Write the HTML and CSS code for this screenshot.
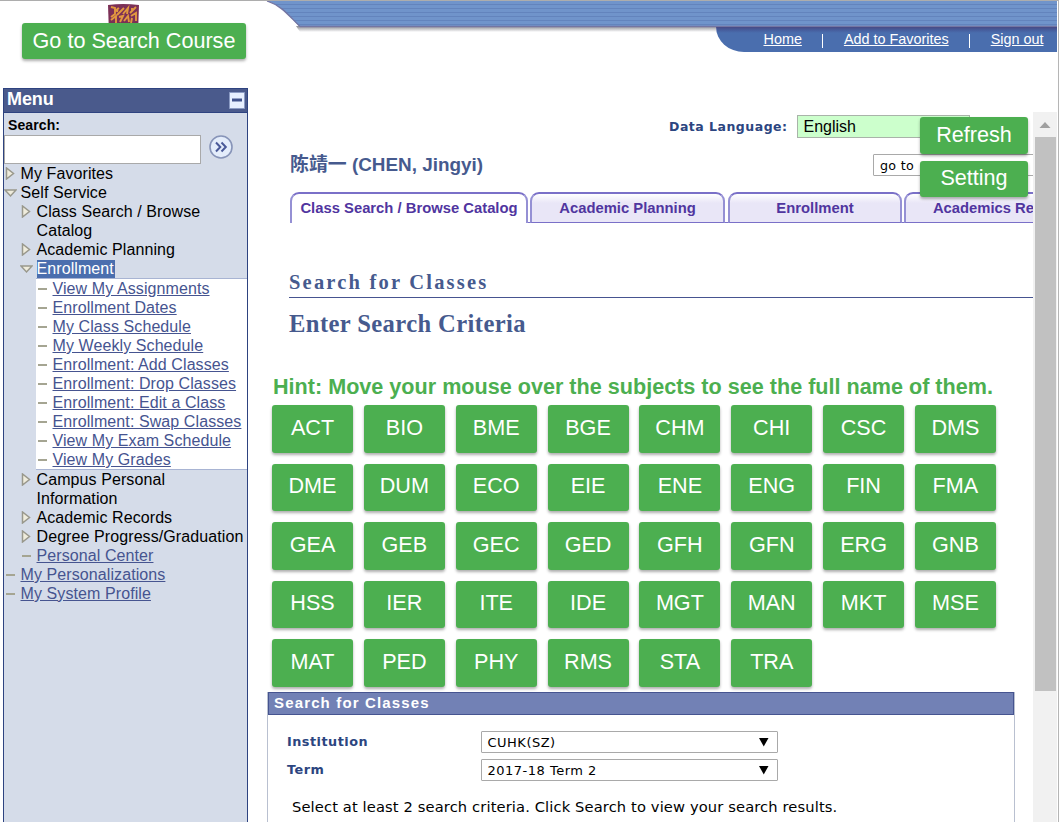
FILE: index.html
```html
<!DOCTYPE html>
<html lang="en">
<head>
<meta charset="utf-8">
<title>Search for Classes</title>
<link rel="stylesheet" href="styles.css">
</head>
<body>
<svg class="defs" width="0" height="0">
  <symbol id="closed" viewBox="0 0 10 13"><path d="M1.500 1v11L8.500 6.500z" fill="#efecdc" stroke="#99988c" stroke-width="1.500"/></symbol>
  <symbol id="open" viewBox="0 0 13 10"><path d="M1 2h11L6.500 8z" fill="#efecdc" stroke="#99988c" stroke-width="1.500"/></symbol>
  <symbol id="dash" viewBox="0 0 10 3"><path d="M0 1h9" stroke="#a5a592" stroke-width="2"/></symbol>
</svg>
<div class="page">
  <header class="header">
    <div class="brand">
      <svg class="seal" width="33" height="30" viewBox="0 0 33 30">
        <path d="M1 1Q16 -1 32 1L31 30H2z" fill="#7c3056"/>
        <path d="M4 3l4 1v6l-4 3M8 7l4-3M10 11l7-7M11 4l-1 4M16 10l5-6-1 6M23 9l6-6M25 4v3M24 12l5-3v8M4 16l5-4v7M12 13l4-1-3 6M17 17l4-5 1 6M25 14l-1 5" fill="none" stroke="#e2983f" stroke-width="1.900"/>
      </svg>
      <button class="btn go">Go to Search Course</button>
    </div>
    <div class="banner">
      <svg class="swoosh" width="793" height="32" viewBox="0 0 793 32">
        <defs>
          <pattern id="stripes" width="8" height="4" patternUnits="userSpaceOnUse"><path d="M0 0h8v4H0z" fill="#7094cb"/><path d="M0 3h8v1H0z" fill="#6384bd"/></pattern>
          <linearGradient id="shade" gradientUnits="userSpaceOnUse" x1="0" y1="25" x2="0" y2="31"><stop offset="0" stop-color="#8a8a90"/><stop offset="1" stop-color="#fff"/></linearGradient>
        </defs>
        <path d="M32 25L36 31H452V25z" fill="url(#shade)"/>
        <path d="M3 0C18 5 24 14 36 26H793V0z" fill="url(#stripes)"/>
        <path d="M3 0C18 5 24 14 36 25.500H793" fill="none" stroke="#7475a2" stroke-width="1.300"/>
      </svg>
      <nav class="nav"><a>Home</a><i></i><a>Add to Favorites</a><i></i><a>Sign out</a></nav>
    </div>
  </header>
  <main class="main">
    <aside class="menu">
      <div class="menu-head">Menu
        <svg width="16" height="17" viewBox="0 0 16 17"><path d="M.5.5h15v16H.5z" fill="#e6efff" stroke="#8b9bc4"/><path d="M3 8h10" stroke="#40528c" stroke-width="3"/></svg>
      </div>
      <div class="search-label">Search:</div>
      <div class="search"><input class="search-input" aria-label="Search">
        <svg width="24" height="24" viewBox="0 0 24 24"><circle cx="12" cy="12" r="11" fill="#e4edfb" stroke="#8794b8" stroke-width="1.600"/><path d="M7 7.500l4.300 4.500L7 16.500M12.500 7.500l4.300 4.500-4.300 4.500" fill="none" stroke="#4a5a99" stroke-width="2"/></svg>
      </div>
      <ul class="tree">
        <li><svg class="tri"><use href="#closed"/></svg>My Favorites</li>
        <li><svg class="down"><use href="#open"/></svg>Self Service</li>
      </ul>
      <ul class="tree sub">
        <li><svg class="tri"><use href="#closed"/></svg>Class Search / Browse<br>Catalog</li>
        <li><svg class="tri"><use href="#closed"/></svg>Academic Planning</li>
        <li><svg class="down"><use href="#open"/></svg><mark>Enrollment</mark></li>
      </ul>
      <ul class="tree leaf">
        <li><svg class="dash"><use href="#dash"/></svg><a>View My Assignments</a></li>
        <li><svg class="dash"><use href="#dash"/></svg><a>Enrollment Dates</a></li>
        <li><svg class="dash"><use href="#dash"/></svg><a>My Class Schedule</a></li>
        <li><svg class="dash"><use href="#dash"/></svg><a>My Weekly Schedule</a></li>
        <li><svg class="dash"><use href="#dash"/></svg><a>Enrollment: Add Classes</a></li>
        <li><svg class="dash"><use href="#dash"/></svg><a>Enrollment: Drop Classes</a></li>
        <li><svg class="dash"><use href="#dash"/></svg><a>Enrollment: Edit a Class</a></li>
        <li><svg class="dash"><use href="#dash"/></svg><a>Enrollment: Swap Classes</a></li>
        <li><svg class="dash"><use href="#dash"/></svg><a>View My Exam Schedule</a></li>
        <li><svg class="dash"><use href="#dash"/></svg><a>View My Grades</a></li>
      </ul>
      <ul class="tree sub">
        <li><svg class="tri"><use href="#closed"/></svg>Campus Personal<br>Information</li>
        <li><svg class="tri"><use href="#closed"/></svg>Academic Records</li>
        <li><svg class="tri"><use href="#closed"/></svg>Degree Progress/Graduation</li>
        <li><svg class="dash"><use href="#dash"/></svg><a>Personal Center</a></li>
      </ul>
      <ul class="tree">
        <li><svg class="dash"><use href="#dash"/></svg><a>My Personalizations</a></li>
        <li><svg class="dash"><use href="#dash"/></svg><a>My System Profile</a></li>
      </ul>
    </aside>
    <section class="content">
      <div class="lang"><span class="lang-label">Data Language:</span><span class="lang-select">English</span></div>
      <div class="person"><h1 class="name">陈靖一 (CHEN, Jingyi)</h1><span class="goto">go to</span></div>
      <div class="tabs">
        <span class="tab active">Class Search / Browse Catalog</span>
        <span class="tab t2">Academic Planning</span>
        <span class="tab t3">Enrollment</span>
        <span class="tab t4">Academics Record</span>
      </div>
      <h2 class="title">Search for Classes</h2>
      <h3 class="subtitle">Enter Search Criteria</h3>
      <p class="hint">Hint: Move your mouse over the subjects to see the full name of them.</p>
      <div class="subjects">
        <button class="btn">ACT</button><button class="btn">BIO</button><button class="btn">BME</button><button class="btn">BGE</button><button class="btn">CHM</button><button class="btn">CHI</button><button class="btn">CSC</button><button class="btn">DMS</button>
        <button class="btn">DME</button><button class="btn">DUM</button><button class="btn">ECO</button><button class="btn">EIE</button><button class="btn">ENE</button><button class="btn">ENG</button><button class="btn">FIN</button><button class="btn">FMA</button>
        <button class="btn">GEA</button><button class="btn">GEB</button><button class="btn">GEC</button><button class="btn">GED</button><button class="btn">GFH</button><button class="btn">GFN</button><button class="btn">ERG</button><button class="btn">GNB</button>
        <button class="btn">HSS</button><button class="btn">IER</button><button class="btn">ITE</button><button class="btn">IDE</button><button class="btn">MGT</button><button class="btn">MAN</button><button class="btn">MKT</button><button class="btn">MSE</button>
        <button class="btn">MAT</button><button class="btn">PED</button><button class="btn">PHY</button><button class="btn">RMS</button><button class="btn">STA</button><button class="btn">TRA</button>
      </div>
      <div class="panel">
        <div class="panel-head">Search for Classes</div>
        <div class="field"><span class="field-label">Institution</span><span class="select">CUHK(SZ)<svg width="10" height="9"><path d="M0 0h9.500L4.750 8.500z"/></svg></span></div>
        <div class="field"><span class="field-label">Term</span><span class="select">2017-18 Term 2<svg width="10" height="9"><path d="M0 0h9.500L4.750 8.500z"/></svg></span></div>
        <p class="note">Select at least 2 search criteria. Click Search to view your search results.</p>
      </div>
    </section>
    <div class="scrollbar"><svg width="24" height="25"><path d="M6.500 16h11L12 10z" fill="#a0a0a0"/></svg><div class="thumb"></div></div>
    <div class="floating"><button class="btn">Refresh</button><button class="btn">Setting</button></div>
  </main>
</div>
</body>
</html>
```
FILE: styles.css
```css
* { box-sizing: border-box; }
body { margin: 0; background: #fff; color: #000; font-family: "Liberation Sans", Arial, sans-serif; overflow: hidden; }
.defs { position: absolute; }
h1, h2, h3, p, ul { margin: 0; padding: 0; }
.page { height: 822px; width: 1059px; border-top: 1px solid #adadad; border-right: 1px solid #b5b5b5; display: flex; flex-direction: column; overflow: hidden; }
.btn { border: 0; border-radius: 3px; background: #4caf50; color: #fff; font: 21.6px/1 "Liberation Sans", Arial, sans-serif; padding: 0 0 2px; box-shadow: 0 2px 3px rgba(0,0,0,.32); white-space: nowrap; }

.header { height: 87px; display: flex; flex: none; }
.brand { width: 264px; position: relative; }
.seal { display: block; margin: 3px 0 0 107px; }
.go { position: absolute; left: 22px; top: 22px; width: 224px; height: 36px; padding: 0; }
.banner { width: 793px; display: flex; flex-direction: column; align-items: flex-end; }
.swoosh { display: block; flex: none; margin-bottom: -6px; }
.nav { width: 341px; height: 25px; position: relative; background: linear-gradient(#484a85 0, #465d9d 3px, #4a6eae 6px); border-bottom-left-radius: 28px 25px; display: flex; align-items: center; justify-content: flex-end; padding: 0 13.5px 1px 0; color: #fff; font-size: 14.4px; white-space: nowrap; }
.nav a { text-decoration: underline; }
.nav i { width: 1px; height: 14px; background: #fff; margin: 3px 21px 0 20px; }

.main { flex: 1; display: flex; position: relative; min-height: 0; }
.menu { width: 245px; margin-left: 3px; flex: none; background: #d5dce9; border: 1px solid #2e4380; border-bottom: 0; }
.menu-head { height: 24px; background: #4a5a8c; border-bottom: 1px solid #2e4380; color: #fff; font-weight: bold; font-size: 18px; letter-spacing: -.1px; display: flex; justify-content: space-between; align-items: center; padding: 0 2px 2px 3px; }
.menu-head svg { margin-top: 1px; }
.search-label { height: 22px; font-weight: bold; font-size: 14px; line-height: 24px; padding-left: 4px; letter-spacing: .1px; }
.search { display: flex; height: 29px; }
.search-input { width: 197px; height: 29px; border: 1px solid #a9a9a9; background: #fff; margin: 0 8px 0 0; padding: 0; }
.tree { list-style: none; font-size: 16px; line-height: 19px; letter-spacing: .09px; white-space: nowrap; }
.tree li { display: flow-root; padding-left: 16.5px; }
.tree svg { float: left; }
.tree a { color: #465490; text-decoration: underline; }
.tree mark { background: #4a6eae; color: #fff; display: inline-block; height: 18px; line-height: 18px; padding-right: 1px; }
.sub { padding-left: 16px; }
.tri { width: 10px; height: 13px; margin: 3px 0 0 -15.5px; }
.down { width: 13px; height: 10px; margin: 5px 0 0 -17px; }
.dash { width: 10px; height: 3px; margin: 9px 0 0 -15px; }
.leaf { margin-left: 32px; background: #fff; border: 1px solid #a8b4d3; border-width: 1px 0; }

.content { width: 785px; flex: none; overflow: hidden; white-space: nowrap; }
.lang { height: 24px; margin-top: 26px; display: flex; align-items: center; }
.lang-label { margin-left: 421px; width: 128px; color: #2c4580; font: bold 12.5px/24px "DejaVu Sans", Verdana, sans-serif; letter-spacing: .5px; padding-top: 1px; }
.lang-select { width: 173px; height: 23px; background: #cfc; border: 1px solid #a9b3a9; font-size: 16px; line-height: 22px; padding-left: 5.5px; }
.person { height: 22px; margin-top: 16px; display: flex; align-items: center; }
.name { margin-left: 42px; width: 583px; flex: none; font: bold 18.9px/22px "Liberation Sans", Arial, "Noto Sans CJK SC", sans-serif; color: #465a8e; }
.goto { width: 170px; flex: none; height: 22px; border: 1px solid #a9a9a9; font: 12.7px/21px "DejaVu Sans", Verdana, sans-serif; letter-spacing: .3px; padding-left: 6px; border-radius: 1px; }
.tabs { margin: 16px 0 0 42px; width: 743px; height: 31px; display: flex; overflow: hidden; background: linear-gradient(#7a70c8, #7a70c8) 238px 30px / 600px 1px no-repeat; }
.tab { flex: none; height: 31px; border: 2px solid #9590d4; border-top-color: #7a70c8; border-bottom: 1px solid #7a70c8; border-radius: 9px 9px 0 0; background: linear-gradient(#fff 0, #e9e6f7 9px); color: #50359f; font-weight: bold; font-size: 14.8px; line-height: 28px; text-align: center; margin-right: 3px; }
.active { width: 238px; background: #fff; border-bottom: 0; margin-right: 2px; }
.t2 { width: 195px; }
.t3 { width: 174px; margin-right: 2px; }
.t4 { width: 190px; padding-left: 1px; }
.title { margin: 48px 0 0 41px; height: 27px; border-bottom: 1px solid #465490; font: bold 20.5px/23px "Liberation Serif", Georgia, serif; letter-spacing: 2.2px; color: #465a8e; }
.subtitle { margin: 12px 0 0 41px; height: 30px; font: bold 24.6px/28px "Liberation Serif", Georgia, serif; letter-spacing: .4px; color: #465a8e; }
.hint { margin: 33px 0 0 25px; height: 28px; font-size: 21.6px; font-weight: bold; line-height: 27px; color: #4caf50; }
.subjects { margin: 4px 0 0 24px; display: grid; grid-template-columns: repeat(8, 81px); grid-auto-rows: 47.5px; gap: 11px 10.85px; }
.panel { width: 748px; height: 160px; margin: 5.5px 0 0 19px; border: 1px solid #b9c0d0; border-top: 0; }
.panel-head { height: 23px; background: #7281b5; border: 1px solid #465490; margin: 0 0 16px; padding-left: 5px; color: #fff; font-weight: bold; font-size: 15px; line-height: 20px; letter-spacing: 1.15px; }
.field { height: 28px; display: flex; align-items: flex-start; }
.field-label { width: 213px; padding-left: 19px; color: #2c4580; font: bold 12.8px/22px "DejaVu Sans", Verdana, sans-serif; letter-spacing: .5px; }
.select { width: 297px; height: 22px; border: 1px solid #a9a9a9; border-radius: 1px; padding: 0 8px 0 5.5px; display: flex; justify-content: space-between; font: 13px/21px "DejaVu Sans", Verdana, sans-serif; letter-spacing: .5px; }
.select svg { margin-top: 6px; }
.note { padding: 10px 0 0 24px; font: 14.7px/20px "DejaVu Sans", Verdana, sans-serif; letter-spacing: .12px; }

.scrollbar { width: 24px; margin: 24px 0 0; background: #f1f1f1; display: flex; flex-direction: column; }
.scrollbar svg { display: block; }
.thumb { width: 21px; height: 554px; margin-left: 2px; background: #c1c1c1; }
.floating { position: absolute; left: 920px; top: 29px; width: 108px; display: grid; grid-template-rows: 37px 36px; gap: 7px; }
```
